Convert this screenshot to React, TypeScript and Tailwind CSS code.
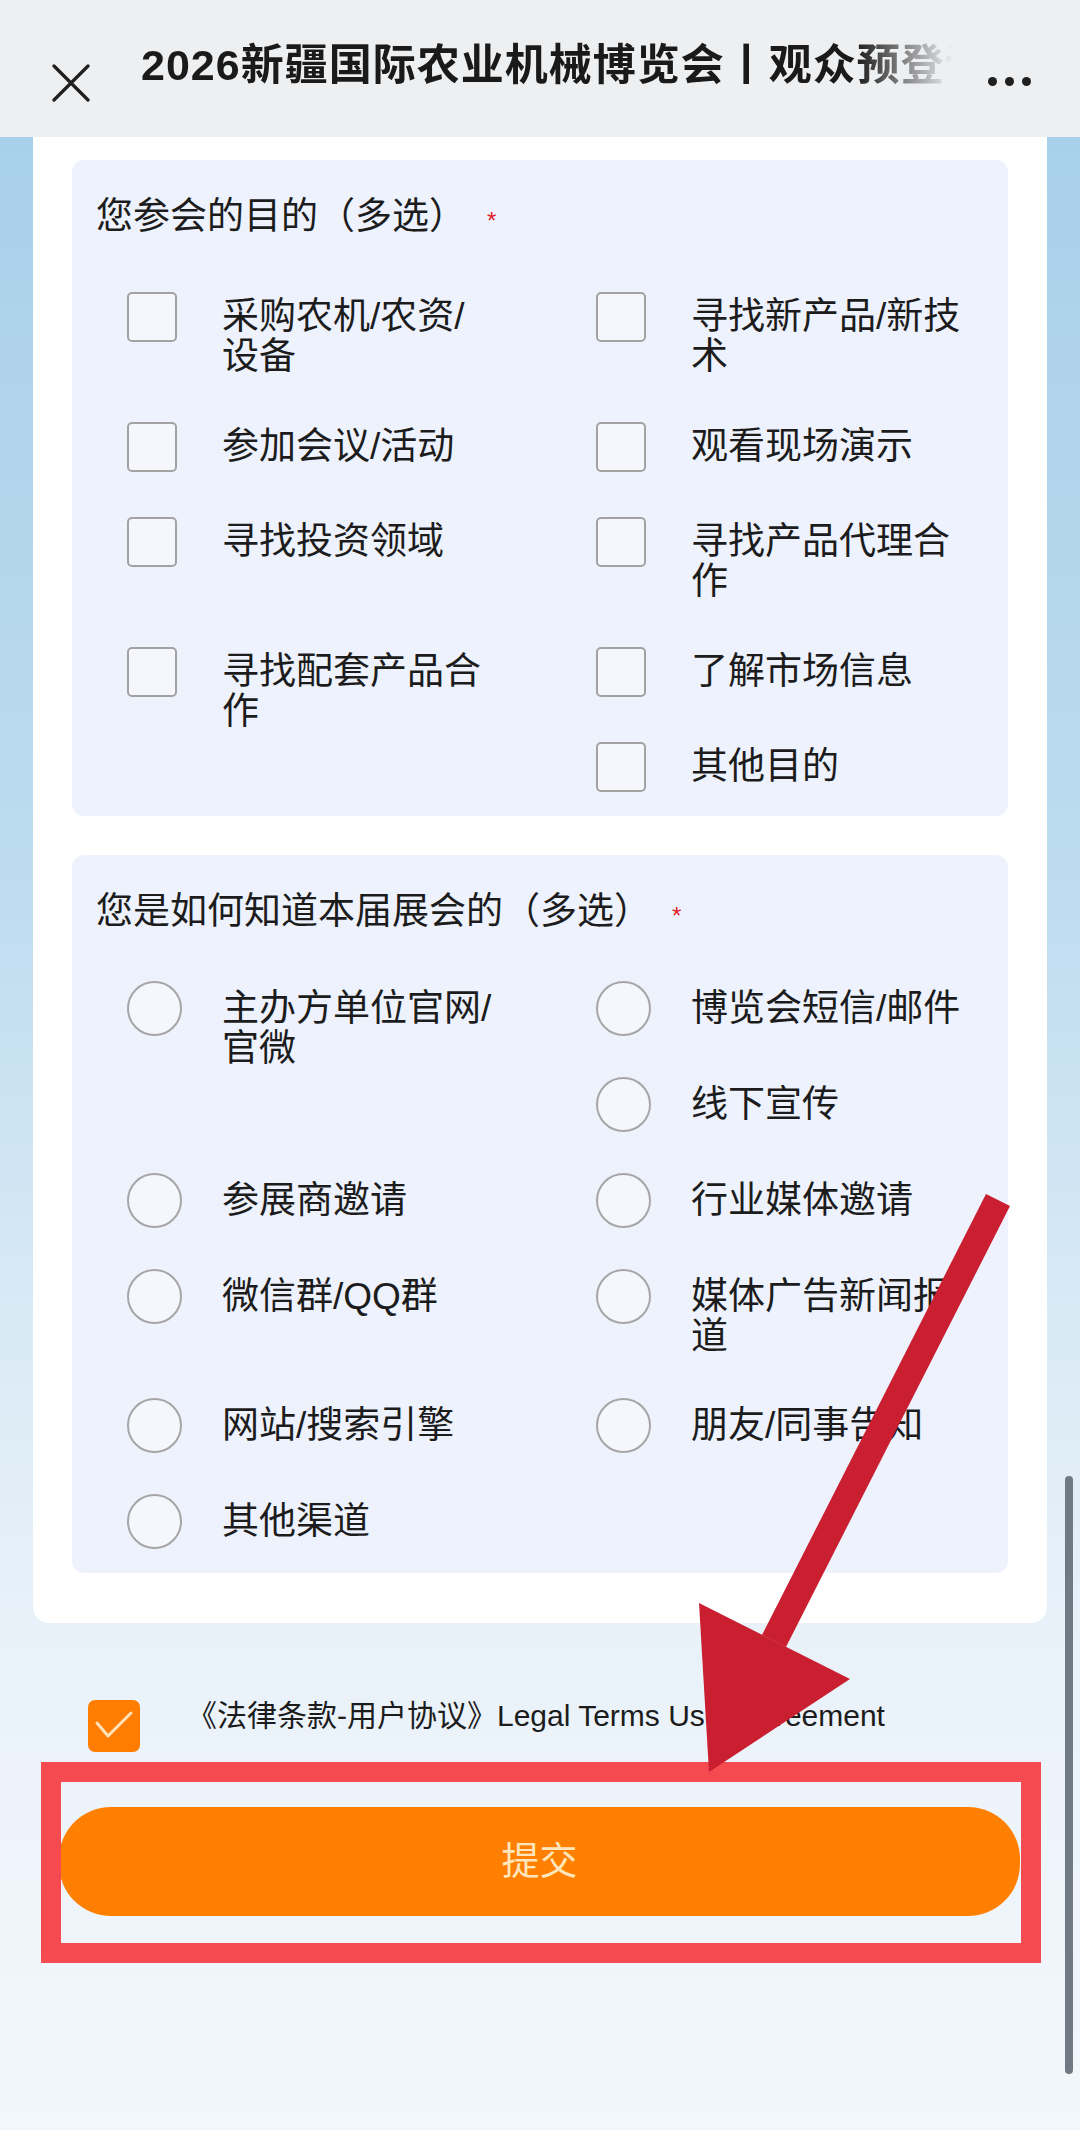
import React from "react";

type Kind = "check" | "radio";

// rows: each row has a left column and a right column (right may stack two items)
const purposeRows: string[][][] = [
  [["采购农机/农资/设备"], ["寻找新产品/新技术"]],
  [["参加会议/活动"], ["观看现场演示"]],
  [["寻找投资领域"], ["寻找产品代理合作"]],
  [["寻找配套产品合作"], ["了解市场信息", "其他目的"]],
];

const sourceRows: string[][][] = [
  [["主办方单位官网/官微"], ["博览会短信/邮件", "线下宣传"]],
  [["参展商邀请"], ["行业媒体邀请"]],
  [["微信群/QQ群"], ["媒体广告新闻报道"]],
  [["网站/搜索引擎"], ["朋友/同事告知"]],
  [["其他渠道"], []],
];

const Option = ({ label, kind }: { label: string; kind: Kind }) => (
  <div className="flex items-start w-[469px]">
    <div className="w-[95px] shrink-0">
      {kind === "check" ? (
        <div className="w-[50px] h-[50px] rounded-[5px] border-2 border-[#a2a2a2] bg-[#f5f7fd]" />
      ) : (
        <div className="w-[55px] h-[55px] rounded-full border-2 border-[#a6a6a6] bg-[#f5f7fd]" />
      )}
    </div>
    <p
      className={`w-[274px] text-[37px] leading-[40px] text-[#1c1c1c] ${
        kind === "check" ? "mt-[5px]" : "mt-[8px]"
      }`}
    >
      {label}
    </p>
  </div>
);

const Panel = ({
  title,
  rows,
  kind,
}: {
  title: string;
  rows: string[][][];
  kind: Kind;
}) => {
  const gap = kind === "check" ? "gap-[45px]" : "gap-[41px]";
  return (
    <div className="rounded-[12px] bg-[#eef2fc] px-[24px] pt-[37px] pb-[24px]">
      <div className="flex items-start h-[40px]">
        <h3 className="text-[37px] leading-[40px] text-[#1c1c1c]">{title}</h3>
        <span className="ml-[21px] text-[24px] leading-[24px] text-[#e0202a] mt-[12px]">*</span>
      </div>
      <div className={`flex flex-col pl-[31px] ${gap} ${kind === "check" ? "mt-[55px]" : "mt-[49px]"}`}>
        {rows.map((row, i) => (
          <div key={i} className="flex items-start">
            <div className={`flex flex-col ${gap}`}>
              {row[0].map((l) => (
                <Option key={l} label={l} kind={kind} />
              ))}
            </div>
            <div className={`flex flex-col ${gap}`}>
              {row[1].map((l) => (
                <Option key={l} label={l} kind={kind} />
              ))}
            </div>
          </div>
        ))}
      </div>
    </div>
  );
};

export default function App() {
  return (
    <div className="relative w-[1080px] h-[2130px] overflow-hidden font-['Liberation_Sans','Noto_Sans_CJK_SC',sans-serif] bg-[linear-gradient(180deg,#a5cee9_0%,#bcdbef_40%,#d9eaf5_62%,#eaf2f9_78%,#f2f7fc_100%)]">
      {/* Header */}
      <div className="flex items-start h-[137px] bg-[#eeeff1] pl-[52px]">
        <svg className="mt-[64px] shrink-0" width="38" height="38" viewBox="0 0 38 38">
          <path d="M2 2 L36 36 M36 2 L2 36" stroke="#1f1f1f" strokeWidth="3.2" strokeLinecap="round" />
        </svg>
        <div className="ml-[51px] mt-[39px] w-[812px] overflow-hidden whitespace-nowrap [mask-image:linear-gradient(to_right,black_88%,transparent_100%)]">
          <span className="text-[43px] leading-[52px] font-semibold text-[#1a1a1a] tracking-[1px]">
            2026新疆国际农业机械博览会丨观众预登记
          </span>
        </div>
        <div className="ml-[35px] mt-[77px] flex gap-[8px]">
          <span className="w-[9px] h-[9px] rounded-full bg-[#1f1f1f]" />
          <span className="w-[9px] h-[9px] rounded-full bg-[#1f1f1f]" />
          <span className="w-[9px] h-[9px] rounded-full bg-[#1f1f1f]" />
        </div>
      </div>

      {/* Form card */}
      <div className="px-[33px]">
        <div className="bg-white rounded-b-[16px] px-[39px] pt-[23px] pb-[50px]">
          <Panel title="您参会的目的（多选）" rows={purposeRows} kind="check" />
          <div className="mt-[39px]">
            <Panel title="您是如何知道本届展会的（多选）" rows={sourceRows} kind="radio" />
          </div>
        </div>
      </div>

      {/* Agreement */}
      <div className="mt-[77px] ml-[88px] flex items-start">
        <div className="w-[52px] h-[52px] rounded-[7px] bg-[#ff7d00] shrink-0">
          <svg width="52" height="52" viewBox="0 0 52 52">
            <polyline points="9,23 20,36 43,13" fill="none" stroke="#ffe2b8" strokeWidth="3" strokeLinecap="round" strokeLinejoin="round" />
          </svg>
        </div>
        <p className="ml-[47px] -mt-[2px] text-[30px] leading-[36px] text-[#1c1c1c]">
          《法律条款-用户协议》Legal Terms User Agreement
        </p>
      </div>

      {/* Submit */}
      <div className="mt-[55px] ml-[59px] w-[961px] h-[109px] rounded-[52px] bg-[#ff8000] flex items-center justify-center">
        <span className="text-[38px] text-[#ffe6bd]">提交</span>
      </div>

      {/* annotation box */}
      <div className="absolute left-[41px] top-[1762px] w-[1000px] h-[201px] border-[20px] border-[#f54a50]" />

      {/* annotation arrow */}
      <svg className="absolute left-0 top-0 pointer-events-none" width="1080" height="2130" viewBox="0 0 1080 2130">
        <polygon points="986,1194 1010,1206 786,1647 762,1635" fill="#c91f31" />
        <polygon points="699,1603 850,1679 709,1772" fill="#c91f31" />
      </svg>

      {/* scrollbar */}
      <div className="absolute left-[1065px] top-[1476px] w-[8px] h-[598px] rounded-full bg-[#6f7a83]" />
    </div>
  );
}
